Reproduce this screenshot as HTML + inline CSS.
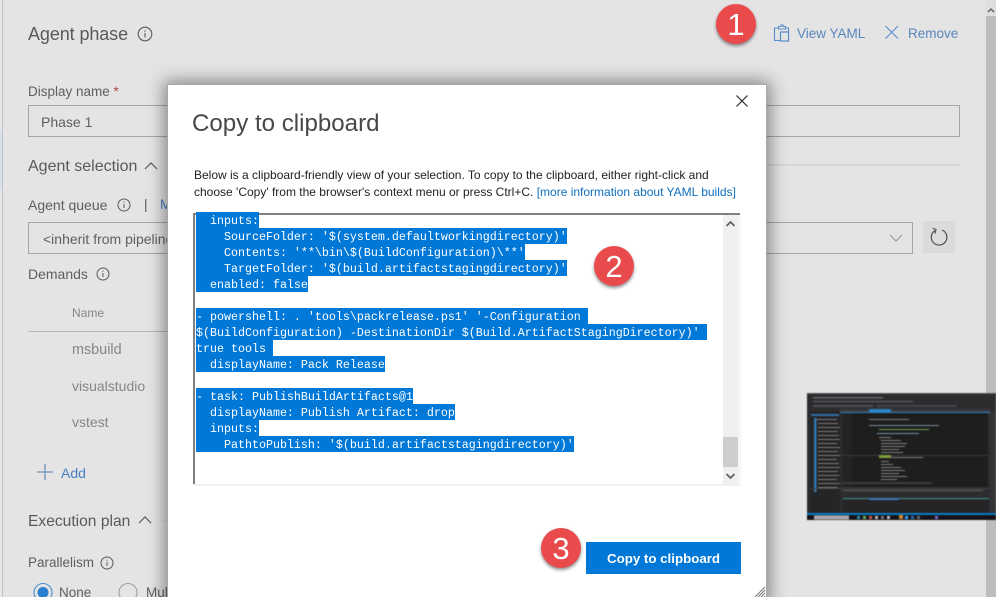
<!DOCTYPE html>
<html><head><meta charset="utf-8"><style>
html,body{margin:0;padding:0;width:996px;height:597px;overflow:hidden;background:#e4e4e4}
*{box-sizing:border-box}
body{position:relative;font-family:"Liberation Sans",sans-serif}
.a{position:absolute}
.t{position:absolute;white-space:nowrap;line-height:18px;font-size:13.5px;color:#5f5f5f}
.h{font-size:16px;color:#5a5a5a;line-height:20px}
.g{color:#858585}
.b{color:#5a86bd}
.box{position:absolute;border:1px solid #a6a6a6}
.c{position:absolute;width:40px;height:40px;border-radius:50%;background:#e94b4c;box-shadow:0 2px 3px rgba(0,0,0,.45);color:#fff;text-align:center;font-size:31px;line-height:42px}
#code{position:absolute;left:196px;top:212px;width:527px;height:272px;overflow:hidden;font-family:"Liberation Mono",monospace;font-size:11.67px;line-height:16px;color:#fff}
#code div{height:16px;white-space:pre}
#code span{display:inline-block;height:16px;padding-top:1px;background:#0078d7;white-space:pre;vertical-align:top}
</style></head><body>
<div class="a" style="left:2px;top:0;width:1px;height:597px;background:#c2c2c2"></div>
<div class="a" style="left:0;top:0;width:2px;height:597px;background:#e8e8e8"></div>
<div class="a" style="left:0;top:130px;width:2px;height:60px;background:#d8e0e9"></div>
<div class="a" style="left:986px;top:0;width:10px;height:597px;background:#bdbdbd"></div>
<div class="a" style="left:986px;top:0;width:10px;height:16px;background:#dedede"></div>
<svg class="a" style="left:986px;top:6px" width="10" height="8"><path d="M2 6l3-3 3 3" fill="none" stroke="#666" stroke-width="1.5"/></svg>

<div class="t" style="left:28px;top:24px;font-size:18px;letter-spacing:-.1px;line-height:20px;color:#5a5a5a">Agent phase</div>
<svg class="a" style="left:137px;top:26px" width="16" height="16"><circle cx="8" cy="8" r="6.8" fill="none" stroke="#5a5a5a" stroke-width="1.1"/><path d="M8 7v4.5M8 4.4v1.4" stroke="#5a5a5a" stroke-width="1.1"/></svg>
<div class="t" style="left:28px;top:83px">Display name <span style="color:#b04a4a">*</span></div>
<div class="box" style="left:28px;top:105px;width:932px;height:32px"></div>
<div class="t" style="left:41px;top:113px;font-size:14px">Phase 1</div>
<div class="t h" style="left:28px;top:157px">Agent selection</div>
<svg class="a" style="left:143px;top:160px" width="16" height="12"><path d="M2 9l6-6 6 6" fill="none" stroke="#5a5a5a" stroke-width="1.2"/></svg>
<div class="a" style="left:760px;top:164px;width:200px;height:2px;background:#d6d6d6"></div>
<div class="t" style="left:28px;top:196px;font-size:14px">Agent queue</div>
<svg class="a" style="left:117px;top:198px" width="14" height="14"><circle cx="7" cy="7" r="6" fill="none" stroke="#5a5a5a"/><path d="M7 6v4M7 3.6v1.2" stroke="#5a5a5a"/></svg>
<div class="t" style="left:144px;top:196px;color:#555">|</div>
<div class="t" style="left:160px;top:196px;color:#4a80c4">M</div>
<div class="box" style="left:28px;top:222px;width:885px;height:32px"></div>
<div class="t" style="left:43px;top:230px;font-size:14px">&lt;inherit from pipeline</div>
<svg class="a" style="left:889px;top:233px" width="14" height="10"><path d="M1 2l6 6 6-6" fill="none" stroke="#999" stroke-width="1.1"/></svg>
<div class="a" style="left:923px;top:221px;width:32px;height:32px;background:#dbdbdb"></div>
<svg class="a" style="left:929px;top:227px" width="20" height="20"><path d="M6 3.6A7.8 7.8 0 1 0 13 3" fill="none" stroke="#4a4f57" stroke-width="1.2"/><path d="M3.6 1.2L7 2.6 6 6.6" fill="none" stroke="#4a4f57" stroke-width="1.1"/></svg>
<div class="t" style="left:28px;top:265px;font-size:14px">Demands</div>
<svg class="a" style="left:96px;top:267px" width="14" height="14"><circle cx="7" cy="7" r="6" fill="none" stroke="#5a5a5a"/><path d="M7 6v4M7 3.6v1.2" stroke="#5a5a5a"/></svg>
<div class="t g" style="left:72px;top:304px;font-size:12px">Name</div>
<div class="a" style="left:28px;top:331px;width:140px;height:1px;background:#b4b4b4"></div>
<div class="t g" style="left:72px;top:341px;font-size:14.4px">msbuild</div>
<div class="t g" style="left:72px;top:377px;font-size:14px">visualstudio</div>
<div class="t g" style="left:72px;top:413px;font-size:14px">vstest</div>
<svg class="a" style="left:36px;top:463px" width="18" height="18"><path d="M1 9h16M9 1v16" stroke="#6d8fbb" stroke-width="1.3"/></svg>
<div class="t" style="left:61px;top:464px;font-size:14px;color:#4a80c4">Add</div>
<div class="t h" style="left:28px;top:512px;font-size:15.6px">Execution plan</div>
<svg class="a" style="left:137px;top:514px" width="16" height="12"><path d="M2 9l6-6 6 6" fill="none" stroke="#5a5a5a" stroke-width="1.2"/></svg>
<div class="a" style="left:163px;top:520px;width:5px;height:1px;background:#d6d6d6"></div>
<div class="t" style="left:28px;top:554px">Parallelism</div>
<svg class="a" style="left:100px;top:556px" width="14" height="14"><circle cx="7" cy="7" r="6" fill="none" stroke="#5a5a5a"/><path d="M7 6v4M7 3.6v1.2" stroke="#5a5a5a"/></svg>
<svg class="a" style="left:33px;top:582px" width="20" height="15"><circle cx="10" cy="10.500" r="9" fill="none" stroke="#4a8ed0" stroke-width="1.1"/><circle cx="10" cy="10.500" r="5.500" fill="#2a80cf"/></svg>
<div class="t" style="left:59px;top:584px">None</div>
<svg class="a" style="left:118px;top:582px" width="20" height="15"><circle cx="10" cy="10.500" r="9" fill="none" stroke="#a0a0a0" stroke-width="1.1"/></svg>
<div class="t" style="left:146px;top:584px">Mul</div>

<svg class="a" style="left:773px;top:24px" width="18" height="18"><path d="M5.500 4H1.500V16.500H7M12.500 4h3V8" fill="none" stroke="#5a8ccc" stroke-width="1.1"/><path d="M5.500 5V2.500h2.500V1h2v1.500h2.500V5z" fill="none" stroke="#5a8ccc" stroke-width="1.100"/><rect x="7.500" y="8" width="8" height="9" fill="none" stroke="#5a8ccc" stroke-width="1.200"/></svg>
<div class="t b" style="left:797px;top:25px">View YAML</div>
<svg class="a" style="left:884px;top:25px" width="16" height="15"><path d="M1.500 1l12.500 12.500M14 1L1.500 13.500" stroke="#5a8ccc" stroke-width="1.100"/></svg>
<div class="t b" style="left:908px;top:25px">Remove</div>

<div class="c" style="left:716px;top:4px">1</div>

<!-- thumbnail -->
<svg class="a" style="left:807px;top:393px;filter:blur(.6px)" width="189" height="127" viewBox="0 0 189 127">
<rect width="189" height="127" fill="#2d2d30"/>
<rect x="0" y="0" width="189" height="1" fill="#555"/>
<g fill="#66666b"><rect x="6" y="4" width="70" height="1.500"/><rect x="6" y="8" width="100" height="1"/></g>
<rect x="6" y="12" width="60" height="2" fill="#4c505a"/><rect x="70" y="12" width="80" height="2" fill="#444449"/>
<rect x="3" y="18" width="30" height="108" fill="#252526"/>
<g fill="#7d7d80"><rect x="8" y="26" width="22" height="1"/><rect x="11" y="30" width="20" height="1"/><rect x="11" y="34" width="22" height="1"/><rect x="11" y="38" width="20" height="1"/><rect x="11" y="42" width="21" height="1"/><rect x="11" y="46" width="22" height="1"/><rect x="11" y="50" width="19" height="1"/><rect x="11" y="54" width="22" height="1"/><rect x="11" y="58" width="20" height="1"/><rect x="11" y="62" width="22" height="1"/><rect x="11" y="66" width="19" height="1"/><rect x="11" y="70" width="21" height="1"/><rect x="11" y="74" width="22" height="1"/><rect x="11" y="78" width="20" height="1"/><rect x="11" y="82" width="21" height="1"/><rect x="11" y="86" width="19" height="1"/><rect x="11" y="90" width="22" height="1"/><rect x="11" y="94" width="20" height="1"/></g>
<rect x="7" y="25" width="2.500" height="74" fill="#2f78b0"/><rect x="4" y="21" width="28" height="2" fill="#2f6ea8"/>
<rect x="33" y="16" width="150" height="3" fill="#3a3a3e"/><rect x="62" y="16" width="22" height="3" fill="#2a84c6"/><rect x="33" y="19" width="150" height="1" fill="#2a84c6"/>
<rect x="35" y="20" width="146" height="74" fill="#1e1e1e"/>
<rect x="35" y="20" width="10" height="74" fill="#232325"/>
<g fill="#808080"><rect x="62" y="26" width="40" height="1"/><rect x="62" y="32" width="70" height="1" fill="#7a8a98"/><rect x="72" y="36" width="50" height="1" fill="#69a060"/><rect x="70" y="40" width="42" height="1" fill="#6a8fb0"/><rect x="72" y="44" width="12" height="1"/><rect x="74" y="47" width="20" height="1"/><rect x="74" y="50" width="26" height="1"/><rect x="74" y="53" width="24" height="1"/><rect x="74" y="56" width="18" height="1"/><rect x="74" y="59" width="22" height="1"/><rect x="72" y="64" width="44" height="1"/><rect x="74" y="68" width="8" height="1"/><rect x="74" y="71" width="12" height="1"/><rect x="74" y="74" width="20" height="1"/><rect x="74" y="77" width="24" height="1"/><rect x="74" y="80" width="18" height="1"/><rect x="74" y="83" width="26" height="1"/><rect x="74" y="86" width="16" height="1"/></g>
<rect x="35" y="62" width="146" height="1" fill="#3a3a3d"/><rect x="72" y="62" width="12" height="3" fill="#7d9e3c"/>
<rect x="35" y="89" width="90" height="2" fill="#3c3c3f"/>
<rect x="3" y="95" width="180" height="1" fill="#444"/>
<rect x="36" y="97" width="140" height="1" fill="#666"/>
<rect x="36" y="105" width="146" height="1" fill="#3f8e8e"/><rect x="62" y="105" width="30" height="2" fill="#3a7ab8"/>
<rect x="36" y="107" width="146" height="13" fill="#252527"/>
<rect x="183" y="18" width="6" height="100" fill="#333338"/>
<rect x="0" y="120" width="189" height="2" fill="#0b7cc4"/>
<rect x="0" y="122" width="189" height="5" fill="#141416"/>
<rect x="7" y="122.500" width="35" height="4" fill="#aaa"/>
<g><rect x="50" y="123" width="3" height="3" fill="#38a"/><rect x="56" y="123" width="3" height="3" fill="#7a5"/><rect x="62" y="123" width="3" height="3" fill="#c55"/><rect x="68" y="123" width="3" height="3" fill="#bbb"/><rect x="74" y="123" width="3" height="3" fill="#777"/><rect x="80" y="123" width="3" height="3" fill="#bbb"/><rect x="92" y="122" width="4" height="4" fill="#d68030"/><rect x="98" y="123" width="3" height="3" fill="#3af"/><rect x="104" y="123" width="3" height="3" fill="#36a"/><rect x="110" y="123" width="3" height="3" fill="#666"/><rect x="128" y="123" width="3" height="3" fill="#86c"/></g>
</svg>

<!-- modal -->
<div class="a" style="left:167px;top:84px;width:600px;height:520px;background:#fff;border:1px solid #a8a8a8;box-shadow:0 0 16px 3px rgba(0,0,0,.42)"></div>
<div class="t" style="left:192px;top:109px;font-size:24.1px;line-height:30px;color:#484848">Copy to clipboard</div>
<svg class="a" style="left:736px;top:95px" width="12" height="12"><path d="M.5.500l11 11M11.500.500l-11 11" stroke="#222" stroke-width="1.100"/></svg>
<div class="t" style="left:194px;top:166px;font-size:12px;color:#222">Below is a clipboard-friendly view of your selection. To copy to the clipboard, either right-click and</div>
<div class="t" style="left:194px;top:183px;font-size:12px;color:#222">choose 'Copy' from the browser's context menu or press Ctrl+C. <span style="color:#106ebe">[more information about YAML builds]</span></div>

<div class="a" style="left:193px;top:213px;width:547px;height:2px;background:#808080"></div>
<div class="a" style="left:193px;top:213px;width:2px;height:272px;background:#808080"></div>
<div class="a" style="left:193px;top:484px;width:548px;height:2px;background:#f1f1f1"></div>
<div class="a" style="left:723px;top:215px;width:15px;height:269px;background:#f0f0f0"></div>
<div class="a" style="left:738px;top:215px;width:3px;height:270px;background:#f6f6f6"></div>
<div class="a" style="left:723px;top:437px;width:15px;height:30px;background:#cdcdcd"></div>
<svg class="a" style="left:725px;top:220px" width="11" height="8"><path d="M1.500 6l4-4 4 4" fill="none" stroke="#606060" stroke-width="1.700"/></svg>
<svg class="a" style="left:725px;top:472px" width="11" height="8"><path d="M1.500 2l4 4 4-4" fill="none" stroke="#606060" stroke-width="1.700"/></svg>
<div id="code"><div><span>  inputs:</span></div><div><span>    SourceFolder: '$(system.defaultworkingdirectory)'</span></div><div><span>    Contents: '**\bin\$(BuildConfiguration)\**'</span></div><div><span>    TargetFolder: '$(build.artifactstagingdirectory)'</span></div><div><span>  enabled: false</span></div><div> </div><div><span>- powershell: . 'tools\packrelease.ps1' '-Configuration </span></div><div><span>$(BuildConfiguration) -DestinationDir $(Build.ArtifactStagingDirectory)' </span></div><div><span>true tools </span></div><div><span>  displayName: Pack Release</span></div><div> </div><div><span>- task: PublishBuildArtifacts@1</span></div><div><span>  displayName: Publish Artifact: drop</span></div><div><span>  inputs:</span></div><div><span>    PathtoPublish: '$(build.artifactstagingdirectory)'</span></div></div>

<div class="c" style="left:594px;top:246px">2</div>
<div class="a" style="left:586px;top:542px;width:155px;height:32px;background:#0078d7;color:#fff;text-align:center;font-size:13.300px;font-weight:bold;line-height:34px">Copy to clipboard</div>
<div class="c" style="left:541px;top:528px">3</div>
<svg class="a" style="left:754px;top:586px" width="12" height="11"><path d="M1 11L11 1M4 11l7-7M7 11l4-4M10 11l1-1" stroke="#777" stroke-width="1"/></svg>
</body></html>
